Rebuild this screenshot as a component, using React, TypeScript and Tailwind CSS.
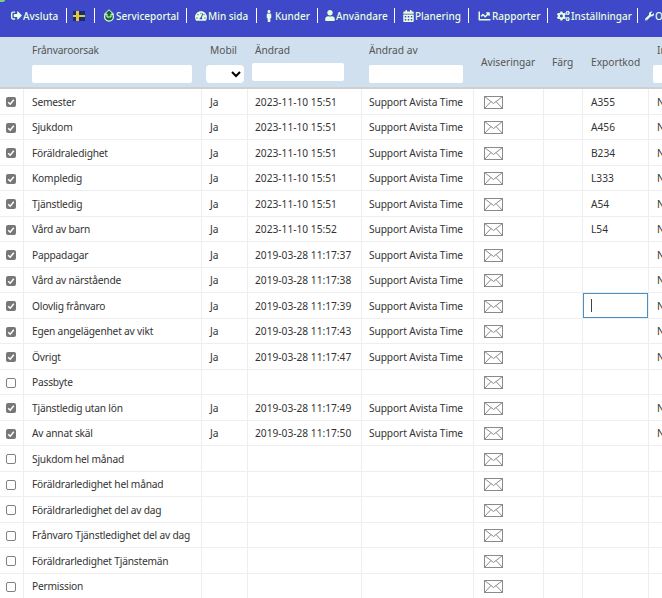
import { FaSignOutAlt, FaTachometerAlt, FaMale, FaUser, FaCalendarAlt, FaChartLine, FaCogs, FaWrench } from 'react-icons/fa'
import type { ReactNode } from 'react'

const gridCols = 'grid grid-cols-[24px_178px_46px_114px_112px_70px_39px_66px_1fr]'
const cell = 'border-r border-[#eeeeee] flex items-center overflow-hidden whitespace-nowrap pt-[2px]'

type Row = { name: string; checked: boolean; date?: string; code?: string }

const rows: Row[] = [
  { name: 'Semester', checked: true, date: '2023-11-10 15:51', code: 'A355' },
  { name: 'Sjukdom', checked: true, date: '2023-11-10 15:51', code: 'A456' },
  { name: 'Föräldraledighet', checked: true, date: '2023-11-10 15:51', code: 'B234' },
  { name: 'Kompledig', checked: true, date: '2023-11-10 15:51', code: 'L333' },
  { name: 'Tjänstledig', checked: true, date: '2023-11-10 15:51', code: 'A54' },
  { name: 'Vård av barn', checked: true, date: '2023-11-10 15:52', code: 'L54' },
  { name: 'Pappadagar', checked: true, date: '2019-03-28 11:17:37' },
  { name: 'Vård av närstående', checked: true, date: '2019-03-28 11:17:38' },
  { name: 'Olovlig frånvaro', checked: true, date: '2019-03-28 11:17:39' },
  { name: 'Egen angelägenhet av vikt', checked: true, date: '2019-03-28 11:17:43' },
  { name: 'Övrigt', checked: true, date: '2019-03-28 11:17:47' },
  { name: 'Passbyte', checked: false },
  { name: 'Tjänstledig utan lön', checked: true, date: '2019-03-28 11:17:49' },
  { name: 'Av annat skäl', checked: true, date: '2019-03-28 11:17:50' },
  { name: 'Sjukdom hel månad', checked: false },
  { name: 'Föräldrarledighet hel månad', checked: false },
  { name: 'Föräldrarledighet del av dag', checked: false },
  { name: 'Frånvaro Tjänstledighet del av dag', checked: false },
  { name: 'Föräldrarledighet Tjänstemän', checked: false },
  { name: 'Permission', checked: false },
]

function NavItem({ icon, label, width, last }: { icon: ReactNode; label?: string; width: string; last?: boolean }) {
  return (
    <div className={`flex items-center h-[15px] pl-[9px] shrink-0 gap-[1px] ${width} ${last ? '' : 'border-r border-white'}`}>
      {icon}
      {label && <span className="pt-px">{label}</span>}
    </div>
  )
}

function SwedishFlag() {
  return (
    <svg width="12" height="10" viewBox="0 0 12 10" className="-ml-[3px]">
      <rect width="12" height="10" fill="#14306e" />
      <rect x="3" width="3" height="10" fill="#e8c23c" />
      <rect y="4" width="12" height="2" fill="#e8c23c" />
    </svg>
  )
}

function PortalIcon() {
  return (
    <svg width="12" height="13" viewBox="0 0 12 13" className="-ml-px">
      <circle cx="6" cy="7.8" r="4.4" fill="#0b6e24" stroke="#eaffea" strokeWidth="1.2" />
      <path d="M1.5 5 6 .8 10.5 5H8v3H4V5z" fill="#0b6e24" stroke="#eaffea" strokeWidth="1" />
    </svg>
  )
}

function Envelope() {
  return (
    <svg width="19" height="13" viewBox="0 0 19 13" fill="none" stroke="#8a8a8a" strokeWidth="1">
      <rect x="0.5" y="0.5" width="18" height="12" />
      <path d="M0.5 0.5 9.5 7.5 18.5 0.5M0.5 12.5 7 5.5M18.5 12.5 12 5.5" />
    </svg>
  )
}

function Checkbox({ checked }: { checked: boolean }) {
  if (!checked) {
    return <span className="block w-[10px] h-[10px] rounded-[2px] border border-[#808080] bg-white" />
  }
  return (
    <span className="flex items-center justify-center w-[10px] h-[10px] rounded-[2px] bg-[#777777]">
      <svg width="8" height="8" viewBox="0 0 8 8" fill="none" stroke="white" strokeWidth="1.5">
        <path d="M1.2 4.2 3.2 6.2 6.8 1.8" />
      </svg>
    </span>
  )
}

export default function App() {
  return (
    <div className="relative w-[662px] h-[598px] overflow-hidden bg-white text-[#333333] text-[10.2px] font-['Noto_Sans',sans-serif]">
      <div className="absolute left-0 top-0 w-[5px] h-[2px] rounded-br-full bg-[#7fd07f]" />

      <nav className="h-[37px] bg-[#3f48c8] flex items-center pb-[6px] text-[#e6ffdc] text-[10px] font-medium overflow-hidden">
        <NavItem width="w-[67px]" icon={<FaSignOutAlt className="w-[11px] h-[11px] ml-[2px]" />} label="Avsluta" />
        <NavItem width="w-[28px]" icon={<SwedishFlag />} />
        <NavItem width="w-[92px]" icon={<PortalIcon />} label="Serviceportal" />
        <NavItem width="w-[70px]" icon={<FaTachometerAlt className="w-[12px] h-[12px] -ml-[1px]" />} label="Min sida" />
        <NavItem width="w-[61px]" icon={<FaMale className="w-[10px] h-[12px] -ml-[2px]" />} label="Kunder" />
        <NavItem width="w-[77px]" icon={<FaUser className="w-[10px] h-[11px] -ml-[2px]" />} label="Användare" />
        <NavItem width="w-[74px]" icon={<FaCalendarAlt className="w-[11px] h-[12px] -ml-[1px]" />} label="Planering" />
        <NavItem width="w-[79px]" icon={<FaChartLine className="w-[13px] h-[12px]" />} label="Rapporter" />
        <NavItem width="w-[90px]" icon={<FaCogs className="w-[13px] h-[12px]" />} label="Inställningar" />
        <NavItem width="w-[60px]" icon={<FaWrench className="w-[12px] h-[12px] -ml-[2px]" />} label="Optioner" last />
      </nav>

      <div className={`${gridCols} h-[52px] bg-[#d0e0ee] border-b-2 border-[#d0d0d0] text-[#555555]`}>
        <div />
        <div className="pl-[8px] pt-[5px]">
          <div className="h-[16px] leading-[16px] tracking-[-0.15px]">Frånvaroorsak</div>
          <input className="block mt-[7px] w-[160px] h-[18px] bg-white rounded-[2px]" aria-label="Frånvaroorsak" />
        </div>
        <div className="pt-[5px]">
          <div className="h-[16px] leading-[16px] pl-[8px]">Mobil</div>
          <select className="block mt-[7px] ml-[4px] w-[38px] h-[18px] bg-white rounded-[4px] text-black" aria-label="Mobil" />
        </div>
        <div className="pt-[5px]">
          <div className="h-[16px] leading-[16px] pl-[7px]">Ändrad</div>
          <input className="block mt-[5px] ml-[4px] w-[92px] h-[18px] bg-white rounded-[2px]" aria-label="Ändrad" />
        </div>
        <div className="pl-[7px] pt-[5px]">
          <div className="h-[16px] leading-[16px]">Ändrad av</div>
          <input className="block mt-[7px] w-[94px] h-[18px] bg-white rounded-[2px]" aria-label="Ändrad av" />
        </div>
        <div className="pl-[7px] flex items-center pt-[2px]">Aviseringar</div>
        <div className="pl-[8px] flex items-center pt-[2px]">Färg</div>
        <div className="pl-[8px] flex items-center pt-[2px]">Exportkod</div>
        <div className="pt-[5px] overflow-hidden whitespace-nowrap">
          <div className="h-[16px] leading-[16px] pl-[8px]">Inaktiv</div>
          <div className="w-[20px] h-[18px] ml-[4px] mt-[7px] bg-white rounded-[2px]" />
        </div>
      </div>

      {rows.map((row, i) => (
        <div key={row.name} className={`${gridCols} h-[25.5px] border-b border-[#eeeeee]`}>
          <div className={`${cell} pl-[6px]`}>
            <Checkbox checked={row.checked} />
          </div>
          <div className={`${cell} pl-[8px] tracking-[-0.2px]`}>{row.name}</div>
          <div className={`${cell} pl-[8px]`}>{row.date ? 'Ja' : ''}</div>
          <div className={`${cell} pl-[7px]`}>{row.date}</div>
          <div className={`${cell} pl-[7px] tracking-[-0.1px]`}>{row.date ? 'Support Avista Time' : ''}</div>
          <div className={`${cell} pl-[10px]`}>
            <Envelope />
          </div>
          <div className={cell} />
          <div className={`${cell} pl-[8px] relative`}>
            {row.code}
            {i === 8 && (
              <div className="absolute inset-0 flex items-center pl-[7px] border border-[#4a8fc4] bg-white">
                <span className="block w-px h-[13px] bg-[#444444]" />
              </div>
            )}
          </div>
          <div className="pl-[8px] pt-[2px] flex items-center overflow-hidden">{row.date ? 'Nej' : ''}</div>
        </div>
      ))}
    </div>
  )
}
